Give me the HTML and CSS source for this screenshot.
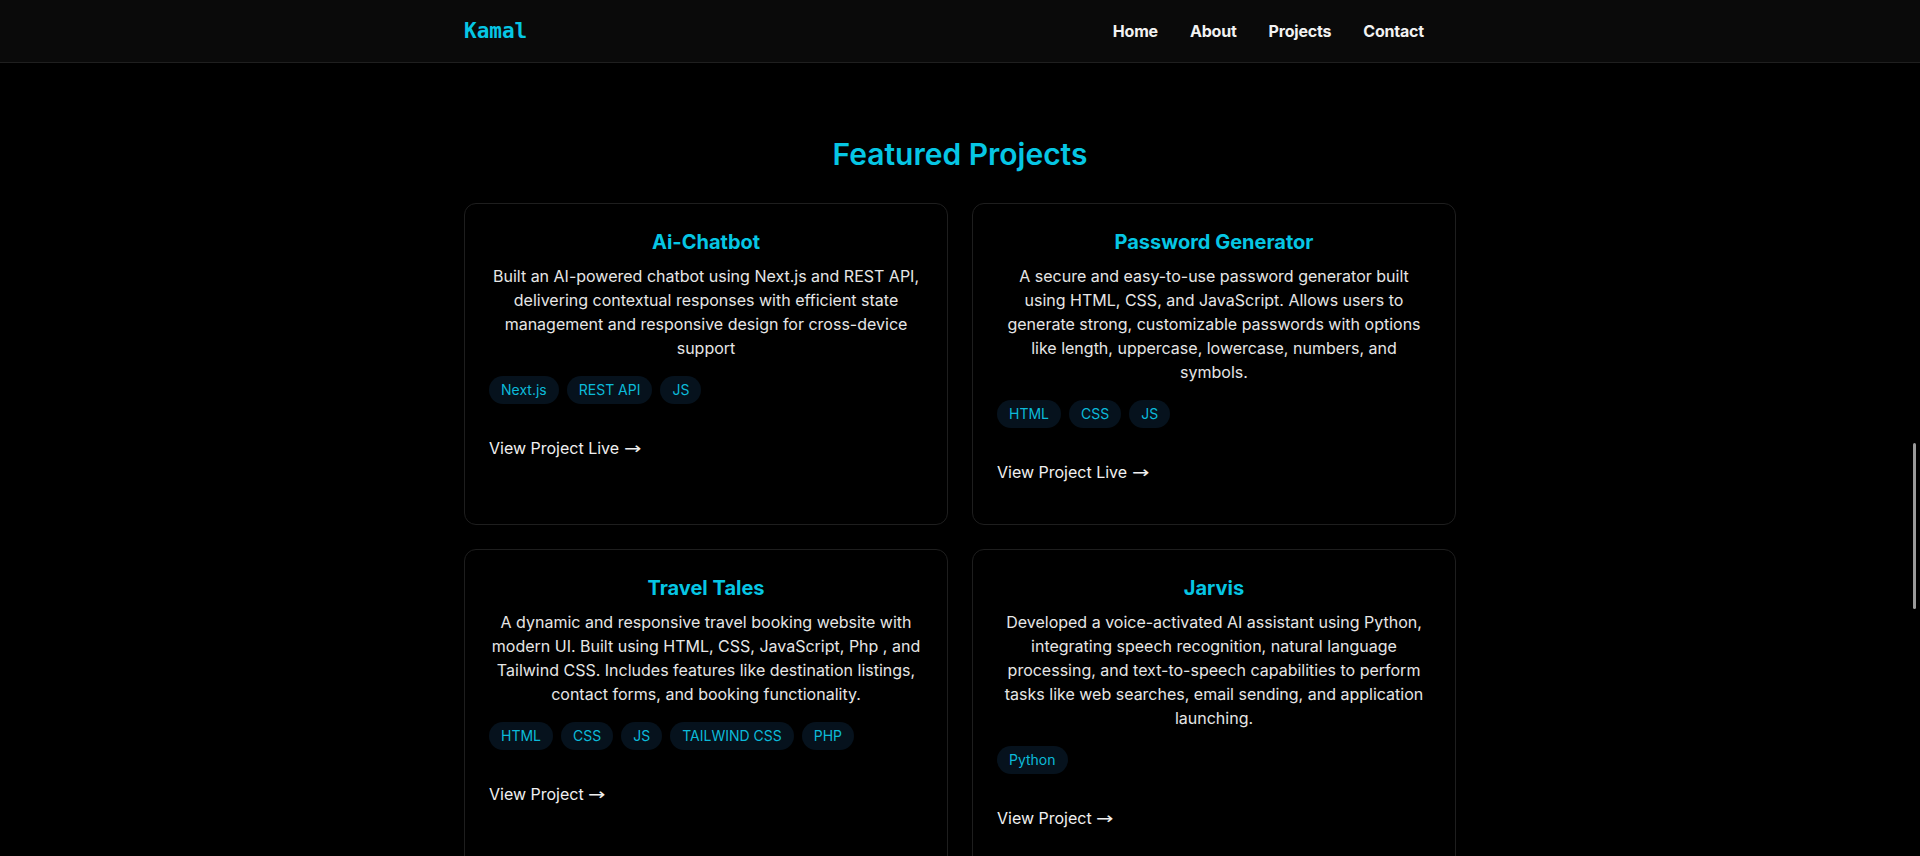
FILE: index.html
```html
<!DOCTYPE html>
<html lang="en">
<head>
<meta charset="utf-8">
<title>Kamal — Projects</title>
<link rel="stylesheet" href="styles.css">
</head>
<body>
<header class="nav">
  <div class="nav-inner">
    <a class="logo" href="#">Kamal</a>
    <ul class="nav-links">
      <li><a href="#">Home</a></li>
      <li><a href="#">About</a></li>
      <li><a href="#">Projects</a></li>
      <li><a href="#">Contact</a></li>
    </ul>
  </div>
</header>
<main class="projects">
  <h2 class="section-title">Featured Projects</h2>
  <div class="grid">
    <article class="card">
      <h3 class="card-title">Ai-Chatbot</h3>
      <p class="card-desc">Built an AI-powered chatbot using Next.js and REST API, delivering contextual responses with efficient state management and responsive design for cross-device support</p>
      <div class="tags"><span class="tag">Next.js</span><span class="tag">REST API</span><span class="tag">JS</span></div>
      <a class="card-link" href="#">View Project Live <span class="arrow">→</span></a>
    </article>
    <article class="card">
      <h3 class="card-title">Password Generator</h3>
      <p class="card-desc">A secure and easy-to-use password generator built using HTML, CSS, and JavaScript. Allows users to generate strong, customizable passwords with options like length, uppercase, lowercase, numbers, and symbols.</p>
      <div class="tags"><span class="tag">HTML</span><span class="tag">CSS</span><span class="tag">JS</span></div>
      <a class="card-link" href="#">View Project Live <span class="arrow">→</span></a>
    </article>
    <article class="card">
      <h3 class="card-title">Travel Tales</h3>
      <p class="card-desc">A dynamic and responsive travel booking website with modern UI. Built using HTML, CSS, JavaScript, Php , and Tailwind CSS. Includes features like destination listings, contact forms, and booking functionality.</p>
      <div class="tags"><span class="tag">HTML</span><span class="tag">CSS</span><span class="tag">JS</span><span class="tag">TAILWIND CSS</span><span class="tag">PHP</span></div>
      <a class="card-link" href="#">View Project <span class="arrow">→</span></a>
    </article>
    <article class="card">
      <h3 class="card-title">Jarvis</h3>
      <p class="card-desc">Developed a voice-activated AI assistant using Python, integrating speech recognition, natural language processing, and text-to-speech capabilities to perform tasks like web searches, email sending, and application launching.</p>
      <div class="tags"><span class="tag">Python</span></div>
      <a class="card-link" href="#">View Project <span class="arrow">→</span></a>
    </article>
  </div>
</main>
<div class="scroll-thumb" aria-hidden="true"></div>
</body>
</html>
```
FILE: styles.css
```css
* { box-sizing: border-box; }
html, body { margin: 0; padding: 0; }
body {
  background: #000;
  color: #e8e8e8;
  font-family: Inter, "Noto Sans", Arial, sans-serif;
  height: 856px;
  overflow: hidden;
}
a { text-decoration: none; color: inherit; }

.nav {
  background: #0a0a0a;
  border-bottom: 1px solid #1f1f1f;
  height: 63px;
}
.nav-inner {
  max-width: 992px;
  margin: 0 auto;
  height: 62px;
  display: flex;
  align-items: center;
  justify-content: space-between;
}
.logo {
  font-family: "DejaVu Sans Mono", "Liberation Mono", monospace;
  font-weight: 700;
  font-size: 21px;
  color: #06c6e4;
  margin-top: -1px;
}
.nav-links {
  list-style: none;
  margin: 0;
  padding: 0 32px 0 0;
  display: flex;
  gap: 32px;
}
.nav-links a {
  color: #f2f2f2;
  font-weight: 700;
  font-size: 16px;
  letter-spacing: -0.2px;
}

.projects {
  max-width: 992px;
  margin: 0 auto;
  padding-top: 73px;
}
.section-title {
  margin: 0 0 31px;
  text-align: center;
  font-size: 30px;
  line-height: 36px;
  font-weight: 600;
  color: #06c6e4;
}
.grid {
  display: grid;
  grid-template-columns: 1fr 1fr;
  gap: 24px;
}
.card {
  border: 1px solid #1e1e1e;
  border-radius: 12px;
  padding: 24px 24px 39px;
  background: #000;
}
.card-title {
  margin: 0 0 8px;
  text-align: center;
  font-size: 20px;
  line-height: 28px;
  font-weight: 700;
  color: #06c6e4;
}
.card-desc {
  margin: 0 0 16px;
  text-align: center;
  font-size: 16px;
  line-height: 24px;
  color: #e6e6e6;
}
.tags {
  display: flex;
  flex-wrap: wrap;
  gap: 8px;
  margin-bottom: 32px;
}
.tag {
  background: #06121d;
  color: #0cbad9;
  font-size: 14px;
  line-height: 20px;
  padding: 4px 12px;
  border-radius: 999px;
}
.card-link {
  display: block;
  font-size: 16px;
  line-height: 24px;
  color: #f0f0f0;
}
.arrow {
  display: inline-block;
  font-family: "DejaVu Sans", sans-serif;
  transform: scaleX(1.3);
  transform-origin: left center;
}

.scroll-thumb {
  position: fixed;
  right: 4px;
  top: 443px;
  width: 3px;
  height: 166px;
  background: #9a9a9a;
  border-radius: 2px;
}
```
